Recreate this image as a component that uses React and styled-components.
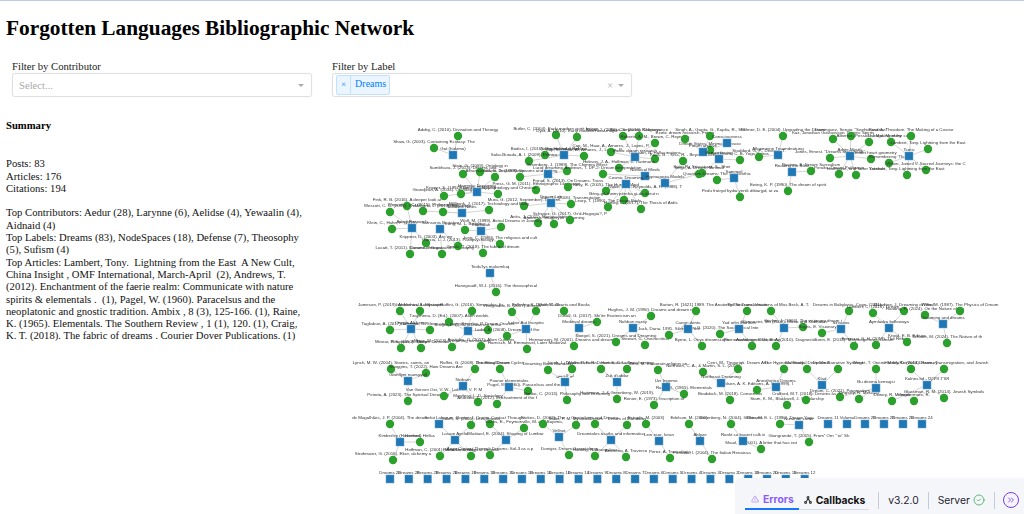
import React from "react";
import styled, { createGlobalStyle } from "styled-components";
import { TriangleAlert, CircleCheck, ChevronsRight } from "lucide-react";

const GlobalStyle = createGlobalStyle`
  html, body {
    margin: 0;
    padding: 0;
    height: 100%;
    background: #fff;
    overflow: hidden;
  }
  #root {
    height: 100%;
  }
`;

// [x, y, label] for the hub, then its leaves. Coordinates are page pixels.
const clusters = [
  { hub: [453, 155, "Gat (hidzmo)"], leaves: [[458, 136, "Addey, C. (2010). Divination and Theurgy"], [434, 148, "Shaw, G. (2003). Containing Ecstasy: The"]] },
  { hub: [564, 155, "Seder Hekhalot Rabbati"], leaves: [[556, 135, "Butler, C. (2004). Early modern spirit beings"], [577, 137, "Dyer, A. (2010). Early modern ritual magic"], [545, 155, "Bodiss, I. (2016). Dream and vision"], [584, 156, "Cap, M., Haar, A., Amores, J., Lopes, P."], [529, 161, "Sako-Burada, A. I. (2009). Ethnica mag"]] },
  { hub: [635, 157, "Exotic dream research"], leaves: [[623, 136, "Kripal, J. (2010). Comparing Religions"], [639, 136, "Hess, S. (2016). Clairvoyance"], [655, 143, "Roberts, A. M., Brown, C. Reynolds"], [611, 152, "Cap, M., Haar, A., Amores, J., Lopes, P."], [655, 159, "Greyson, B. Hallucinations"], [619, 168, "Hobson, J. A., Hoffman, E. Hartmann"]] },
  { hub: [548, 174, "Lucid dreaming"], leaves: [[567, 171, "Greenberg, J. (1989). The Chimera Effect"], [520, 177, "Kuiken, D. (1986). Dreams and feeling"], [536, 190, "Press, G. M. (2011). Ethnographic Language"], [568, 187, "Freud, S. (2013). On Dreams. Trans"]] },
  { hub: [645, 176, "Nonlocal Minds"], leaves: [[603, 174, "Andrews, T. DP-2: Dream Interpretation"]] },
  { hub: [626, 184, "Cosmic Dreaming"], leaves: [[606, 191, "Kelly, R. (2005). The Human Mind"], [645, 193, "Wolfe, K. A., Reynolds, A. R. (1988). T"], [624, 200, "Bény-gé-theim péreha gi-de-derut n"], [641, 209, "Hartley, L. (2017). The Thesis of Ardis"], [608, 207, "Leary, T. (1990). The Dream Body"]] },
  { hub: [665, 183, "Hypnagogia Models"], leaves: [[683, 161, "Kaas, B. - Kiss, R. - Beyond Lucid"], [699, 174, "Singh, A. Dream: Minimal"]] },
  { hub: [703, 152, "Forum archive"], leaves: [[685, 139, "Exotic dream research. Fringe"], [710, 136, "Singh, A., Gupta, G., Kapila, R., Shi"]] },
  { hub: [727, 143, "Consciousness"], leaves: [[710, 150, "Dream States, Minimal Conscio"]] },
  { hub: [719, 159, "Remembering"], leaves: [[740, 160, "Stockhorst, C. B. Yoga Sutras"], [702, 173, "Kaur, R., Srivastava, S., Sher"]] },
  { hub: [734, 178, "Sommeil"], leaves: [[717, 180, "Quantum Dreams: The Sephirothic"], [740, 197, "Pedu fratryd hydia ynnik dibiarjyd, at za"]] },
  { hub: [778, 155, "Allgemeine Traumdeutung"], leaves: [[783, 136, "Wilmer, D. E. (2004). Upgrading the Dream"], [759, 157, "Stoddard, G. P., Dreams, T."]] },
  { hub: [792, 172, "Reading the Bible"], leaves: [[811, 171, "Pastern, E. Dream Surrealism"], [788, 191, "Ewing, K. P. (1990). The dream of spirit"]] },
  { hub: [850, 156, "Adyte Mystic"], leaves: [[833, 139, "Kaz, Jonathan Gustavsson. Oneiric Spirits"], [851, 136, "Dominguez, Sergio. \"Sophia and the\""], [869, 142, "Albertus, Pessoa, Jorge. Memory"], [830, 158, "Jones, Ernest. \"Dreams and Occult\""], [871, 159, "Gari-endet heart geometry"], [839, 174, "Peralta, Dream Pathways"], [856, 175, "Hartmann, and Sefer Yetzirah"]] },
  { hub: [909, 156, "Tsotsi"], leaves: [[891, 142, "The Making of the coatic"], [911, 136, "Roszak, Theodore. The Making of a Course"], [928, 149, "Lambert, Tony. Lightning from the East"], [889, 163, "Remembering 'Third'"], [926, 170, "Wilton, Jameil V. Sacred Journeys: the C"], [907, 175, "Lambert, Tony. Lightning from the East"]] },
  { hub: [477, 192, "Hermetic Dreaming"], leaves: [[463, 174, "Sambhava, J. (2013). Dreams and"], [480, 172, "Stein, G. (2009). Ontology in"], [495, 177, "Athanasiadis, D. Jewish Sleep"], [444, 196, "Grandjean, A. (2014). Onirologie"], [461, 194, "Kripper, S. (1997). Dream Telepathy"], [498, 194, "Ruiz, G. (2012). Ontology and Christian"]] },
  { hub: [551, 203, "Dream Lab"], leaves: [[524, 206, "Mura, G. (2012, September). Dreams"], [571, 204, "Luis, D. (2005). Transmutation"], [538, 223, "Ariès, J. (2011). Manuscripts"], [554, 224, "Amoroso, Imagery of Dreaming"], [570, 220, "Schwarz, G. (2017). Gr'd-Hagogia?, P"]] },
  { hub: [462, 213, "Millbank Notes"], leaves: [[423, 211, "Wescott, C. C. (2015). Philosophical"], [443, 212, "Milbank, J. (2017). Byzantine"], [489, 210, "Millbank, J. (2017). Technology and Body"]] },
  { hub: [412, 228, "Astral Research"], leaves: [[407, 206, "Fink, R. B. (2016). A deeper look at"], [390, 212, "Wescott, C. C. (2015). The"], [392, 229, "Klein, C., Hahn, F. (2019)"], [426, 243, "Krippner, D. (2003). Are we"], [410, 254, "Lacatt, T. (2011). Dreams of Gnosis"]] },
  { hub: [440, 229, "Samsonis Bartolus"], leaves: [[442, 254, "Canonis, Imagos and Philosophy"], [458, 246, "Garcia, L. J. (2013). Parapsychology"]] },
  { hub: [481, 231, "Kabbalah"], leaves: [[465, 230, "Long, M. L. Bridging"], [501, 227, "Wolf, M. (1999). Astral Dreams in Journey"], [500, 244, "Jung, C. (1960). The religious and cult"], [483, 253, "Gorski, T. (2018). The fabric of dream"]] },
  { hub: [490, 273, "Teidu'lys makumluq"], leaves: [[496, 292, "Hanegraaff, W.J. (2016). The theosophical"]] },

  { hub: [411, 329, "Oneiric Alchemy"], leaves: [[400, 311, "Jameson, P. (2019). Alchemical Landscape"], [420, 311, "Iamblichus, A. Mysteries"], [390, 330, "Tagliabue, A. (2017). Dreams"], [430, 330, "Lachman, G. Sleep and Magic"], [401, 348, "Minear, P. S. (1950). Sleep"], [421, 348, "Bregman, R. Dream Divination"]] },
  { hub: [468, 331, "Kruger, B. (1992). Dreaming in the"], leaves: [[449, 322, "Tzaymeria, D. (Ed.). (2007). Alien worlds"], [472, 311, "Ruffini, G. (2016). Simonides: Its"], [488, 330, "Kingsley, P. Dream Oracles"], [452, 347, "Mage, M. (2013). Dreaming for extrater"], [481, 346, "Aristides, C. (2017). Alien Cultures"]] },
  { hub: [526, 329, "Labor Aut Inceptio"], leaves: [[512, 312, "Vinogradov, B. (2017). Ethnos"], [536, 311, "Bulkeley, K. Dream Cults"], [507, 336, "Ladin, A. (2008). Dreaming of the"], [527, 349, "Harnisch, M. Emmanuel, Later Medieval"]] },
  { hub: [579, 328, "Medieval dreams"], leaves: [[564, 311, "Wolf, M. Charts and Books"], [597, 322, "Duvall, G. (2017). Shi'ite Esotericism an"], [574, 346, "Hermansen, M. (2001). Dreams and dreaming"]] },
  { hub: [633, 328, "Nohbon nassy"], leaves: [[616, 342, "Noegel, S. (2021). Dreams and Dreaming"], [645, 345, "Stewart, C. Oneirocritica"], [651, 316, "Hughes, J. M. (1990). Dreams and dream ro"]] },
  { hub: [688, 329, "Cangri dentu"], leaves: [[669, 335, "Jack, Dana. 1991. Silencing the"], [696, 311, "Burton, R. [1621] 1989. The Anatomy"], [702, 346, "Byrne, L. Onyx dreamscape"]] },
  { hub: [739, 329, "Yad orlin Ihantors"], leaves: [[747, 311, "The Seasons, Vision"], [720, 334, "Oracle, G. (2020). The Sociological Inte"], [752, 346, "Phenomenology of Dreaming"]] },
  { hub: [784, 328, "Glennester, Mu (2000). Music and Kabbalah"], leaves: [[771, 311, "The Transformations of Mus Beck, A. T."], [803, 327, "Garlan, J. (1966). The visionary dream i"], [776, 346, "Auditorium Unlit, R. A. (2010). Diagnostic"]] },
  { hub: [841, 329, "Sirvanos"], leaves: [[849, 311, "Dreams in Babylonia, Cogn. (2021). I"], [822, 333, "Bayes, E. Visionary Arts"], [854, 346, "Sonn, E. (2018). Morphogenesis, Dream"]] },
  { hub: [889, 328, "Aymladza bellewaya"], leaves: [[873, 313, "Lambert, C. (2015). Dream"], [904, 311, "Banerjee, J. Dreaming of Mind"], [876, 345, "Fonseca, G. H. (2019). The Reborn"], [907, 342, "Kripal, E. B. Edison"]] },
  { hub: [943, 324, "Dreaming and dreams"], leaves: [[925, 315, "Harding, R. (2024). On the Nature of the"], [960, 311, "Wirtz, M. (1987). The Physics of Dream"], [947, 343, "Schafer, M. (2024). The Nature of th"]] },

  { hub: [408, 381, "Glanflynt nawsyyoll"], leaves: [[391, 369, "Lynch, M. W. (2004). Stories, saints, an"], [426, 373, "Scoggins, T. (2022). How Dreams Are"], [408, 401, "Peirota, A. (2023). The Spiritual Dreaming"]] },
  { hub: [463, 386, "Neibam"], leaves: [[475, 369, "Ruffini, G. (2008). The Ritual Dream"], [444, 396, "Van Gerven Oei, V. W., Latimer, V. P. M"], [478, 402, "Mowbray, L. D. Sociology"]] },
  { hub: [509, 387, "Pounor elementales"], leaves: [[500, 369, "Dreaming Dream Cycles"], [528, 391, "Pagel, W. (1960). Paracelsus and the neo"], [497, 404, "Andrews, T. (2012). Enchantment of the f"]] },
  { hub: [565, 382, "ابو الحسن"], leaves: [[548, 370, "Dreaming Book Mandalas"], [572, 369, "Jacob, L. Dream Theories"], [567, 400, "Bimbo, C. (2013). Philosophy and Dreaming"]] },
  { hub: [617, 382, "Zuk d'uddar"], leaves: [[601, 369, "Wolfson, E. R. Dream Sanctuaries"], [627, 369, "Horton, C. L. Transforming"], [617, 399, "Hartmann, J. & Greenberg, W. (2019)."]] },
  { hub: [666, 387, "Uzr Ingemo"], leaves: [[658, 370, "Cerri, M. Elaborate religion an"], [684, 394, "Raine, K. (1965). Elementals"], [654, 405, "Renier, E. (1973). Inscription of"]] },
  { hub: [721, 383, "Northeast Dreaming"], leaves: [[703, 372, "Northeen, C. A., & Martin, S. L. (2019)"], [738, 369, "Cerri, M., Tinguriqti. Dream Arts"], [730, 400, "Braddock, M. (2018). Consensus"]] },
  { hub: [776, 387, "Anesthetics Dreams"], leaves: [[784, 369, "The Hypnosis Study"], [757, 390, "Ohlsen, A. K. Editions, A. D. (1999). I"], [787, 405, "Stam, K. M., Blackwell, J. Scholarship"]] },
  { hub: [822, 385, "Klad"], leaves: [[807, 369, "Multimodal Deep Mind"], [838, 369, "Dream Narrative Systems"], [806, 400, "Crafford, M.T. (2018). Dreams as a"]] },
  { hub: [876, 388, "Bu dexma kemagsi"], leaves: [[876, 369, "Wright, T. Oneiric Motifs"], [840, 397, "Dream, C. (2021). Pragmatism"], [859, 399, "Kingsley, R. Mesopot"]] },
  { hub: [927, 385, "Kalnes ltd - אור'נ ופנקס"], leaves: [[911, 369, "Hartley, D. (2013). Ramsey"], [944, 369, "Reinhold. Dream, Transmigration, and Jewish"], [892, 401, "Dewey, R. Meinger"], [914, 401, "Greatermore, R."], [944, 398, "Glassman, R. M. (2014). Jewish Symbols"]] },

  { hub: [400, 442, "Kimberley (Haverford)"], leaves: [[390, 424, "de Magalhães, J. P. (2004). The dream"], [420, 442, "Hermes, Hellas"], [393, 460, "Strohmaier, G. (2016). Elixir, alchemy a"]] },
  { hub: [439, 424, "Sefat Laborum"], leaves: [] },
  { hub: [455, 440, "Lasare Ayelid"], leaves: [[471, 425, "Saleh, S. (2005). Levi-Strauss"], [440, 456, "Hoffman, C. (2001). Mind Dreaming"], [471, 456, "Fontaine, L. Magical Dreams"]], links: [[439, 424]] },
  { hub: [506, 440, "Mattiael, E. (2004). Shaping of Lumbar"], leaves: [[490, 424, "Baxter, J. Oneiric Contact Through"], [524, 428, "Sachs, E., Feymonville, M. and Bajema,"], [490, 455, "Aeon Contact Through Dreams: Sol-3 as a p"]] },
  { hub: [559, 437, "Vellnot"], leaves: [[543, 424, "Stokes, D. (2002). The"], [576, 425, "Miller, P. M. Mystical Dream"], [569, 455, "Doniger, Dream Gerontology"]] },
  { hub: [611, 440, "Dreamtales ásatks and informatica"], leaves: [[595, 424, "Oneirologie and Dreams"], [627, 425, "Dream of Mandalas"], [595, 456, "Harding, R. Anomalous"], [626, 457, "Amoreno, A. Traverso"]] },
  { hub: [659, 441, "Lew xsar, Iuran"], leaves: [[646, 424, "Estrada, M. (2003)"], [670, 458, "Perez, A. Trancología"]] },
  { hub: [700, 441, "Ablyze"], leaves: [[689, 424, "Edelson, M. (2001)"], [712, 459, "Fontana, I. (2004). The Italian Renaissa"]] },
  { hub: [743, 441, "Rankt su buaret calk iii"], leaves: [[731, 424, "Greenberg, N. (2004). It Dreams"], [761, 449, "Shaul, D. (2001). A letter that has not"]] },
  { hub: [799, 425, "Kursinae caner"], leaves: [[780, 424, "Elkin, M. E. L. (1990). Dream Yoga"], [809, 442, "Giangrande, T. (2015). From\" Om \" to\" Sh"]] },
];

const rowNumbers = [28, 28, 28, 28, 19, 18, 15, 18, 16, 16, 10, 9, 8, 7, 6, 5, 4, 3, 2, 18, 20, 15, 12];
const dreamRow = rowNumbers.map((n, i) => [390 + i * 18.85, 479, `Dreams ${n}`]);
const upperRow = [[828, 424, "Dreams 11"], [847, 424, "Volumu"], [865, 424, "Dreams 28"], [884, 424, "Dreams 28"], [903, 424, "Dreams 28"], [922, 424, "Dreams 24"]];

const GraphSvg = styled.svg`
  display: block;
  flex: none;
  width: 704px;
  height: 404px;
  filter: blur(0.35px);
`;

const Edge = styled.line`
  stroke: #cfcfcf;
  stroke-width: 0.9;
`;

const Hub = styled.rect`
  fill: #1f77b4;
  stroke: #dfeaf3;
  stroke-width: 0.6;
`;

const Leaf = styled.circle`
  fill: #2ca02c;
`;

const NodeLabel = styled.text`
  font-family: "Liberation Sans", Arial, sans-serif;
  font-size: 4.4px;
  fill: #333;
  text-anchor: middle;
`;

const Square = ({ node }) => (
  <g>
    <Hub x={node[0] - 4.2} y={node[1] - 4.2} width="8.4" height="8.4" />
    <NodeLabel x={node[0]} y={node[1] - 5.5}>{node[2]}</NodeLabel>
  </g>
);

const Dot = ({ node }) => (
  <g>
    <Leaf cx={node[0]} cy={node[1]} r="4.2" />
    <NodeLabel x={node[0]} y={node[1] - 5.5}>{node[2]}</NodeLabel>
  </g>
);

const Graph = () => (
  <GraphSvg viewBox="320 110 704 404">
    {clusters.map((c) =>
      [...c.leaves, ...(c.links || [])].map((l) => (
        <Edge key={`${c.hub[0]}-${c.hub[1]}-${l[0]}-${l[1]}`} x1={c.hub[0]} y1={c.hub[1]} x2={l[0]} y2={l[1]} />
      ))
    )}
    {clusters.map((c) => c.leaves.map((l) => <Dot key={`${l[0]}-${l[1]}`} node={l} />))}
    {clusters.map((c) => <Square key={`${c.hub[0]}-${c.hub[1]}`} node={c.hub} />)}
    {[...dreamRow, ...upperRow].map((n) => <Square key={`${n[0]}-${n[1]}`} node={n} />)}
  </GraphSvg>
);

const Page = styled.div`
  height: 100%;
  display: flex;
  flex-direction: column;
  font-family: "Liberation Serif", "Times New Roman", serif;
  font-size: 10.67px;
  color: #000;
  border-top: 1px solid #b9cde8;
  box-sizing: border-box;
`;

const Title = styled.h1`
  font-size: 21.33px;
  font-weight: bold;
  margin: 15px 0 0 6px;
`;

const Filters = styled.div`
  display: flex;
  gap: 20px;
  padding: 0 12px;
  margin-top: 19px;
`;

const Filter = styled.div`
  width: 300px;
  color: #222;
`;

const SelectBox = styled.div`
  display: flex;
  align-items: center;
  height: 24px;
  margin-top: 1px;
  padding: 0 7px 0 3px;
  box-sizing: border-box;
  border: 1px solid #e0e0e0;
  border-radius: 3px;
  box-shadow: 0 0 1px #ddd;
`;

const Placeholder = styled.span`
  flex: 1;
  padding-left: 3px;
  color: #aaa;
`;

const Chip = styled.span`
  display: flex;
  align-items: stretch;
  height: 18px;
  color: #007eff;
  background: #ebf5ff;
  border: 1px solid #c2e0ff;
  border-radius: 2px;
  line-height: 16px;
`;

const ChipRemove = styled.span`
  padding: 0 4px;
  border-right: 1px solid #c2e0ff;
  font-size: 9px;
`;

const ChipText = styled.span`
  padding: 0 3px 0 4px;
  font-size: 10px;
`;

const Spacer = styled.span`
  flex: 1;
`;

const Clear = styled.span`
  margin-right: 5px;
  color: #aaa;
  font-size: 10px;
`;

const Caret = styled.span`
  width: 0;
  height: 0;
  border-style: solid;
  border-width: 3.5px 3.5px 0;
  border-color: #aaa transparent transparent;
`;

const Main = styled.div`
  margin-top: 13px;
  height: 404px;
  display: flex;
`;

const Summary = styled.div`
  width: 302px;
  margin-left: 6px;
  margin-right: 12px;
  padding-top: 9px;
  flex: none;
  line-height: 12.3px;
`;

const SummaryHead = styled.h4`
  margin: 0 0 26px;
  font-size: 10.67px;
`;

const Block = styled.p`
  margin: 0 0 12.3px;
  color: #111;
  white-space: pre-wrap;
`;

const Debug = styled.div`
  position: absolute;
  right: 0;
  bottom: 0;
  width: 289px;
  height: 36px;
  display: flex;
  align-items: center;
  box-sizing: border-box;
  padding: 8px 0 0 10px;
  background: #f5f6fa;
  border-top-left-radius: 5px;
  font-family: Inter, "Noto Sans", sans-serif;
  font-size: 10.3px;
  color: #1f2430;
`;

const Tabs = styled.div`
  display: flex;
  align-items: stretch;
  height: 20px;
`;

const Tab = styled.div`
  display: flex;
  align-items: center;
  gap: 4px;
  box-sizing: border-box;
  padding: 0 ${(p) => (p.$active ? "5px 0 6px" : "4px 0 5px")};
  font-weight: 700;
  color: ${(p) => (p.$active ? "#8b5cf6" : "#111")};
  border-bottom: ${(p) => (p.$active ? "2px solid #1975fa" : "1px solid #d8dce6")};
`;

const Divider = styled.span`
  flex: none;
  width: 1px;
  height: 17px;
  margin: 0 9px;
  background: #c4cbdc;
`;

const Status = styled.span`
  display: flex;
  align-items: center;
  gap: 3px;
`;

const Toggle = styled.span`
  flex: none;
  display: flex;
  align-items: center;
  justify-content: center;
  box-sizing: border-box;
  width: 16px;
  height: 16px;
  margin-left: -1px;
  border: 1.2px solid #7c3aed;
  border-radius: 50%;
  color: #7c3aed;
`;

const CallbackIcon = () => (
  <svg width="8" height="8" viewBox="0 0 10 10" fill="none" stroke="#333" strokeWidth="1.3">
    <circle cx="2" cy="8" r="1.2" />
    <circle cx="8" cy="8" r="1.2" />
    <circle cx="5" cy="2" r="1.2" />
    <path d="M5 3 L3 7 M5 3 L7.5 7" />
  </svg>
);

const App = () => (
  <>
    <GlobalStyle />
    <Page>
      <Title>Forgotten Languages Bibliographic Network</Title>
      <Filters>
        <Filter>
          Filter by Contributor
          <SelectBox>
            <Placeholder>Select...</Placeholder>
            <Caret />
          </SelectBox>
        </Filter>
        <Filter>
          Filter by Label
          <SelectBox>
            <Chip>
              <ChipRemove>×</ChipRemove>
              <ChipText>Dreams</ChipText>
            </Chip>
            <Spacer />
            <Clear>×</Clear>
            <Caret />
          </SelectBox>
        </Filter>
      </Filters>
      <Main>
        <Summary>
          <SummaryHead>Summary</SummaryHead>
          <Block>
            Posts: 83
            <br />
            Articles: 176
            <br />
            Citations: 194
          </Block>
          <Block>
            Top Contributors: Aedur (28), Larynne (6), Aelidse (4), Yewaalin (4), Aidnaid (4)
            <br />
            Top Labels: Dreams (83), NodeSpaces (18), Defense (7), Theosophy (5), Sufism (4)
            <br />
            Top Articles: Lambert, Tony.  Lightning from the East  A New Cult, China Insight , OMF International, March-April  (2), Andrews, T. (2012). Enchantment of the faerie realm: Communicate with nature spirits &amp; elementals .  (1), Pagel, W. (1960). Paracelsus and the neoplatonic and gnostic tradition. Ambix , 8 (3), 125-166. (1), Raine, K. (1965). Elementals. The Southern Review , 1 (1), 120. (1), Craig, K. T. (2018). The fabric of dreams . Courier Dover Publications. (1)
          </Block>
        </Summary>
        <Graph />
      </Main>
      <Debug>
        <Tabs>
          <Tab $active>
            <TriangleAlert size={8} strokeWidth={1.5} />
            Errors
          </Tab>
          <Tab>
            <CallbackIcon />
            Callbacks
          </Tab>
        </Tabs>
        <Divider />
        <Status>v3.2.0</Status>
        <Divider />
        <Status>
          Server
          <CircleCheck size={12} color="#3fa85c" strokeWidth={1.6} />
        </Status>
        <Divider />
        <Toggle>
          <ChevronsRight size={10} strokeWidth={2} />
        </Toggle>
      </Debug>
    </Page>
  </>
);

export default App;
